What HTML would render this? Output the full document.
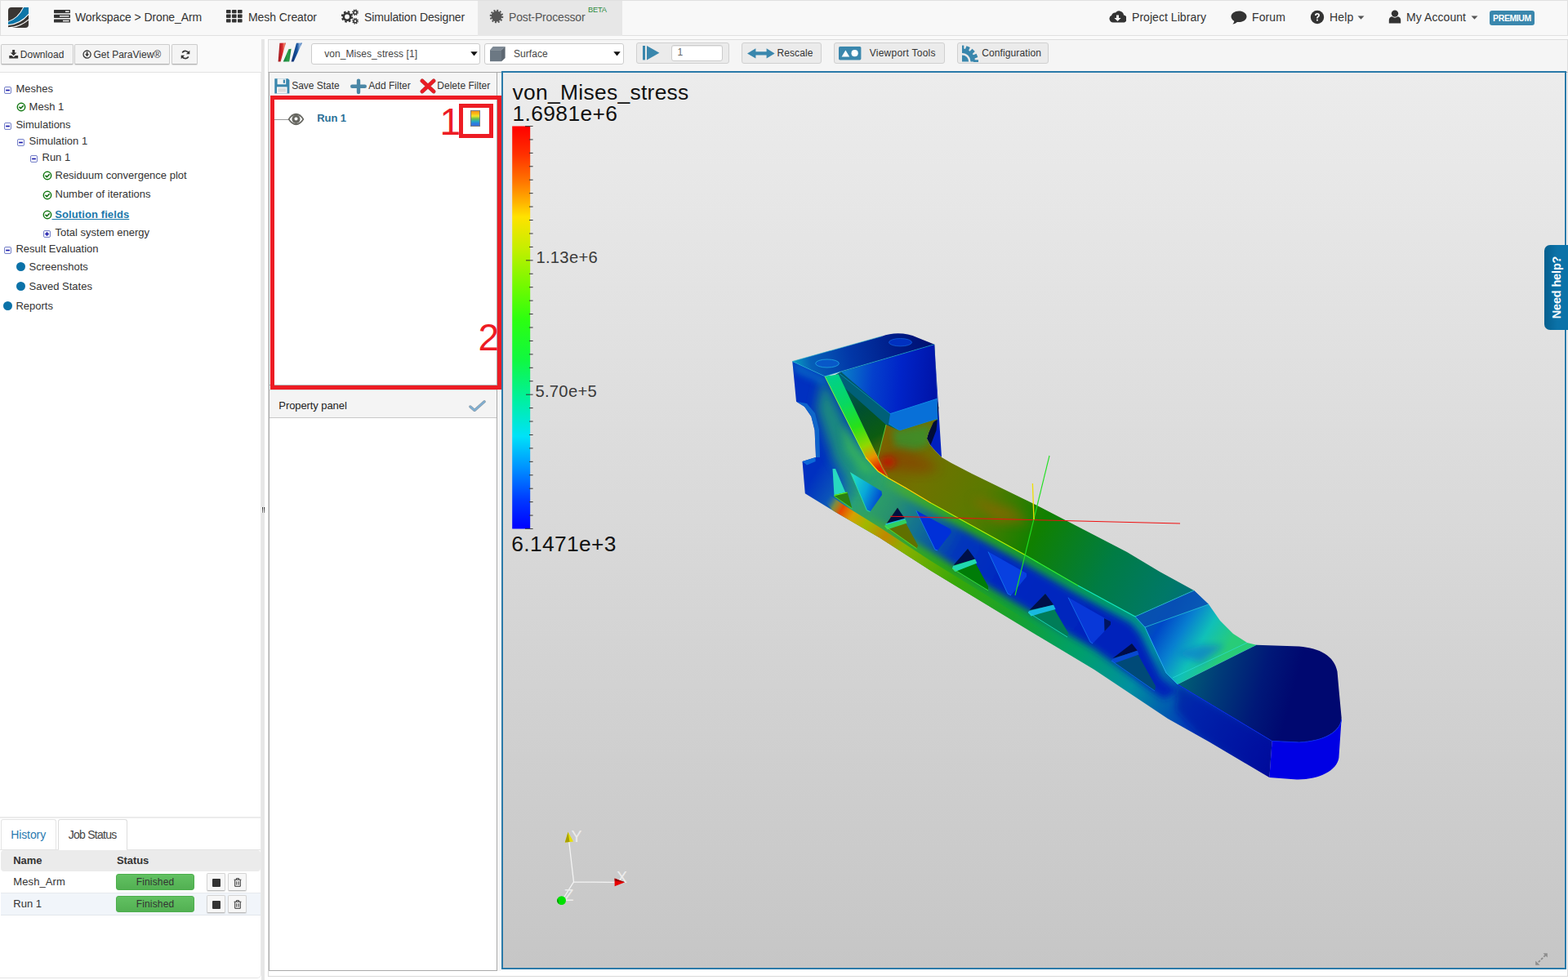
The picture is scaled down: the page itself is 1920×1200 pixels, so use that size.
<!DOCTYPE html>
<html><head><meta charset="utf-8"><title>Post-Processor</title>
<style>
*{box-sizing:border-box;margin:0;padding:0}
html,body{width:1920px;height:1200px;overflow:hidden;background:#fff;font-family:"Liberation Sans",sans-serif;color:#333}
.abs{position:absolute}
#nav{position:absolute;left:0;top:0;width:1920px;height:44px;background:#f8f8f8;border:1px solid #e0e0e0;}
#nav .it{position:absolute;top:0;height:42px;line-height:41px;font-size:14px;color:#333;white-space:nowrap}
#nav svg{position:absolute}
#lefttb{position:absolute;left:0;top:44px;width:320px;height:45px;background:#fafafa;border-bottom:1px solid #e3e3e3}
.btn{position:absolute;height:25px;border:1px solid #ccc;border-bottom-color:#b3b3b3;border-radius:2px;background:#f4f4f4;font-size:12px;line-height:23px;color:#333;white-space:nowrap;box-shadow:0 1px 1px rgba(0,0,0,.12)}
#tree{position:absolute;left:0;top:89px;width:320px;font-size:13px;color:#333}
#tree div{position:absolute;white-space:nowrap;height:16px;line-height:16px}
#splitter{position:absolute;left:320px;top:48px;width:4px;height:1152px;background:#e6e6e6}
#maintb{position:absolute;left:328px;top:48px;width:1592px;height:41px;background:#f5f5f5;border:1px solid #ddd;border-bottom:1px solid #a9a9a9}
.sel{position:absolute;top:53px;height:26px;background:#fff;border:1px solid #ccc;border-radius:3px;font-size:12px;line-height:24.8px;color:#444}
.tbtn{position:absolute;top:52px;height:26px;border:1px solid #d0d0d0;border-radius:3px;background:#ebebeb;font-size:12px;line-height:24px;color:#333;white-space:nowrap}
#fpanel{position:absolute;left:329px;top:88px;width:280px;height:1101px;border:1px solid #a9a9a9;background:#fff}
#ftb{position:absolute;left:0;top:0;width:278px;height:29px;background:#f5f5f5;font-size:12px;color:#333}
#view{position:absolute;left:614px;top:87px;width:1304px;height:1100px;border:2px solid #2a7aa9;background:linear-gradient(#ececec,#c6c6c6);overflow:hidden}
#job{position:absolute;left:0;top:1000px;width:320px;height:200px}
.fin{position:absolute;left:142px;width:96px;height:20px;border-radius:3px;background:linear-gradient(#62c162,#52b052);border:1px solid #4cae4c;color:#333;font-size:12px;line-height:18px;text-align:center;letter-spacing:0.15px}
.sb{position:absolute;width:23px;height:22px;border:1px solid #d4d4d4;border-bottom-color:#bbb;border-radius:2px;background:#f7f7f7;box-shadow:0 1px 1px rgba(0,0,0,.1)}
.sb i{position:absolute;left:6px;top:5.5px;width:10px;height:10px;background:#333;border-radius:1px}
</style></head><body>
<div id="nav">
<svg style="left:9px;top:8px" width="25" height="25" viewBox="0 0 25 25"><defs><clipPath id="lg"><path d="M0 4 Q0 0 4 0 L25 0 L25 21 Q25 25 21 25 L0 25 Z"/></clipPath></defs><g clip-path="url(#lg)"><rect width="25" height="25" fill="#3a3633"/><path d="M-1 17.2 Q12 13.5 18.6 -1 L26 -1 L26 8 Q15 21.5 -1 22.2 Z" fill="#fff"/><path d="M-1 18 Q13 14.5 19.6 -1 L26 -1 L26 6.6 Q15 20 -1 21.2 Z" fill="#0d76a8"/><path d="M-1 24.4 Q14 24 26 13.6 L26 14.8 Q14 25.4 -1 25.4 Z" fill="#fff"/></g></svg>
<svg style="left:65px;top:11px" width="20" height="16" viewBox="0 0 20 16"><g fill="#333"><rect x="0" y="0" width="20" height="4.2" rx=".6"/><rect x="0" y="5.7" width="20" height="4.2" rx=".6"/><rect x="0" y="11.4" width="20" height="4.2" rx=".6"/></g><g fill="#f4f4f4"><rect x="14" y="1.4" width="4.6" height="1.5"/><rect x="7" y="7.1" width="11.6" height="1.5"/><rect x="11" y="12.8" width="7.6" height="1.5"/></g></svg>
<span class="it" id="n1" style="letter-spacing:-0.11px;left:91px">Workspace &gt; Drone_Arm</span>
<svg style="left:276px;top:11px" width="20" height="16" viewBox="0 0 20 16"><g fill="#333"><rect x="0" y="0" width="5.6" height="4.3" rx=".7"/><rect x="7" y="0" width="5.6" height="4.3" rx=".7"/><rect x="14" y="0" width="5.6" height="4.3" rx=".7"/><rect x="0" y="5.6" width="5.6" height="4.3" rx=".7"/><rect x="7" y="5.6" width="5.6" height="4.3" rx=".7"/><rect x="14" y="5.6" width="5.6" height="4.3" rx=".7"/><rect x="0" y="11.2" width="5.6" height="4.3" rx=".7"/><rect x="7" y="11.2" width="5.6" height="4.3" rx=".7"/><rect x="14" y="11.2" width="5.6" height="4.3" rx=".7"/></g></svg>
<span class="it" id="n2" style="letter-spacing:-0.07px;left:303px">Mesh Creator</span>
<svg style="left:417px;top:10px" width="22" height="19" viewBox="0 0 22 19"><g fill="none" stroke="#333"><circle cx="7" cy="9.5" r="4.2" stroke-width="2.6"/><circle cx="7" cy="9.5" r="6.2" stroke-width="2" stroke-dasharray="2.6 2.27"/><circle cx="17" cy="4.2" r="2" stroke-width="1.5"/><circle cx="17" cy="4.2" r="3.2" stroke-width="1.4" stroke-dasharray="1.4 1.11"/><circle cx="17" cy="14.8" r="2" stroke-width="1.5"/><circle cx="17" cy="14.8" r="3.2" stroke-width="1.4" stroke-dasharray="1.4 1.11"/></g></svg>
<span class="it" id="n3" style="letter-spacing:-0.12px;left:445px">Simulation Designer</span>
<div style="position:absolute;left:584px;top:0;width:177px;height:43px;background:#e7e7e7"></div>
<svg style="left:598px;top:10px" width="18" height="18" viewBox="0 0 18 18"><circle cx="9" cy="9" r="6.4" fill="#555"/><circle cx="9" cy="9" r="7.2" fill="none" stroke="#555" stroke-width="2.2" stroke-dasharray="2 1.77"/></svg>
<span class="it" id="n4" style="letter-spacing:-0.16px;left:622px;color:#555">Post-Processor</span>
<span id="beta" style="position:absolute;left:719px;top:6px;font-size:9.3px;line-height:11px;color:#2e8b3e;letter-spacing:-0.2px">BETA</span>
<svg style="left:1357px;top:11px" width="21" height="16" viewBox="0 0 21 16"><path d="M5 15.5 A4.6 4.6 0 0 1 3.2 6.7 A4 4 0 0 1 8 3.6 A5.6 5.6 0 0 1 18 6.4 A4.5 4.5 0 0 1 16.6 15.5 Z" fill="#333"/><path d="M9 6.5 h3 v3.4 h2.6 L10.5 14 L6.4 9.9 H9 Z" fill="#f8f8f8"/></svg>
<span class="it" id="n5" style="letter-spacing:0.05px;left:1385px">Project Library</span>
<svg style="left:1506px;top:12px" width="20" height="17" viewBox="0 0 20 17"><path d="M10 0.5 C15.2 0.5 19.5 3.5 19.5 7.3 C19.5 11.1 15.2 14.1 10 14.1 C9.2 14.1 8.5 14 7.8 13.9 C6.4 15.4 4.4 16.2 2.4 16.4 C3.6 15.4 4.2 14.1 4.2 12.8 C1.9 11.5 0.5 9.5 0.5 7.3 C0.5 3.5 4.8 0.5 10 0.5 Z" fill="#333"/></svg>
<span class="it" id="n6" style="letter-spacing:0.10px;left:1532px">Forum</span>
<svg style="left:1603px;top:11px" width="18" height="18" viewBox="0 0 18 18"><circle cx="9" cy="9" r="8.2" fill="#333"/><path d="M6 6.9 Q6 4 9 4 Q12 4 12 6.7 Q12 8.4 10.3 9.2 Q9.9 9.5 9.9 10.6 H8 Q7.9 8.9 9 8.2 Q10 7.6 10 6.8 Q10 5.8 9 5.8 Q7.9 5.8 7.9 6.9 Z M8 11.7 h1.9 v1.9 h-1.9 Z" fill="#f8f8f8"/></svg>
<span class="it" id="n7" style="letter-spacing:0.17px;left:1627px">Help</span>
<svg style="left:1661px;top:18px" width="9" height="5" viewBox="0 0 9 5"><path d="M0.5 0.5 H8.5 L4.5 4.7 Z" fill="#555"/></svg>
<svg style="left:1699px;top:11px" width="16" height="17" viewBox="0 0 16 17"><circle cx="8" cy="4.6" r="4.2" fill="#333"/><path d="M0.8 16.5 V12.5 Q0.8 9 4.5 8.3 Q8 11 11.5 8.3 Q15.2 9 15.2 12.5 V16.5 Z" fill="#333"/></svg>
<span class="it" id="n8" style="letter-spacing:0.07px;left:1721px">My Account</span>
<svg style="left:1800px;top:18px" width="9" height="5" viewBox="0 0 9 5"><path d="M0.5 0.5 H8.5 L4.5 4.7 Z" fill="#555"/></svg>
<span id="prem" style="position:absolute;left:1823px;top:12px;width:55px;height:18px;border-radius:3px;background:#3a87ad;color:#fff;font-weight:bold;font-size:10.5px;line-height:19px;text-align:center;letter-spacing:-0.4px">PREMIUM</span>
</div>
<div class="abs" style="left:0;top:44px;width:1920px;height:4px;background:#fafafa"></div>
<div id="lefttb">
<div class="btn" style="left:1px;top:10px;width:89px"><svg style="position:absolute;left:9px;top:6px" width="11.6" height="10.6" viewBox="0 0 13 11" preserveAspectRatio="none"><path d="M4.6 0 h3.4 v3.6 h2.6 L6.3 7.6 L2 3.6 h2.6 Z" fill="#333"/><path d="M0.3 7.3 h3.4 l2.6 2 l2.6 -2 h3.6 v3.5 h-12.2 Z" fill="#333"/></svg><span id="b1" style="position:absolute;left:22.8px;top:1.2px;letter-spacing:0.02px">Download</span></div>
<div class="btn" style="left:91px;top:10px;width:117px"><svg style="position:absolute;left:9px;top:6.4px" width="11.2" height="11.2" viewBox="0 0 12 12"><circle cx="6" cy="6" r="4.9" fill="none" stroke="#333" stroke-width="1.4"/><path d="M5 2.8 h2 v2.9 h1.7 L6 8.9 L3.3 5.7 H5 Z" fill="#333"/></svg><span id="b2" style="position:absolute;left:22.5px;top:1.2px;letter-spacing:0px">Get ParaView®</span></div>
<div class="btn" style="left:210px;top:10px;width:32px"><svg style="position:absolute;left:9.5px;top:6px" width="12" height="12" viewBox="0 0 12 12"><path d="M10.2 4.6 A4.5 4.5 0 0 0 2.2 3.4" fill="none" stroke="#333" stroke-width="1.7"/><path d="M1.8 7.4 A4.5 4.5 0 0 0 9.8 8.6" fill="none" stroke="#333" stroke-width="1.7"/><path d="M11.3 0.8 V5.2 H6.9 Z" fill="#333"/><path d="M0.7 11.2 V6.8 H5.1 Z" fill="#333"/></svg></div>
</div>
<div id="tree">
<svg style="position:absolute;left:5px;top:17px" width="9.4" height="9.4" viewBox="0 0 10 10"><rect x="0.5" y="0.5" width="8.6" height="8.6" rx="1.6" fill="#f4f4fb" stroke="#6b78c4" stroke-width="1"/><rect x="2.3" y="4" width="5" height="1.6" fill="#1111a8"/></svg>
<div id="t0" style="left:19.4px;top:12.05px;">Meshes</div>
<svg style="position:absolute;left:19.5px;top:35.7px" width="12" height="12" viewBox="0 0 12 12"><circle cx="6" cy="6" r="4.7" fill="#fff" stroke="#147a14" stroke-width="1.5"/><path d="M3.5 5.9 L5.4 7.7 L8.7 4.2" fill="none" stroke="#0f6a0f" stroke-width="1.6"/></svg>
<div id="t1" style="left:35.6px;top:34.05px;">Mesh 1</div>
<svg style="position:absolute;left:5px;top:61px" width="9.4" height="9.4" viewBox="0 0 10 10"><rect x="0.5" y="0.5" width="8.6" height="8.6" rx="1.6" fill="#f4f4fb" stroke="#6b78c4" stroke-width="1"/><rect x="2.3" y="4" width="5" height="1.6" fill="#1111a8"/></svg>
<div id="t2" style="left:19.4px;top:55.90px;">Simulations</div>
<svg style="position:absolute;left:21px;top:81px" width="9.4" height="9.4" viewBox="0 0 10 10"><rect x="0.5" y="0.5" width="8.6" height="8.6" rx="1.6" fill="#f4f4fb" stroke="#6b78c4" stroke-width="1"/><rect x="2.3" y="4" width="5" height="1.6" fill="#1111a8"/></svg>
<div id="t3" style="left:35.6px;top:75.90px;">Simulation 1</div>
<svg style="position:absolute;left:37px;top:101px" width="9.4" height="9.4" viewBox="0 0 10 10"><rect x="0.5" y="0.5" width="8.6" height="8.6" rx="1.6" fill="#f4f4fb" stroke="#6b78c4" stroke-width="1"/><rect x="2.3" y="4" width="5" height="1.6" fill="#1111a8"/></svg>
<div id="t4" style="left:51.5px;top:96.30px;">Run 1</div>
<svg style="position:absolute;left:51.5px;top:120.2px" width="12" height="12" viewBox="0 0 12 12"><circle cx="6" cy="6" r="4.7" fill="#fff" stroke="#147a14" stroke-width="1.5"/><path d="M3.5 5.9 L5.4 7.7 L8.7 4.2" fill="none" stroke="#0f6a0f" stroke-width="1.6"/></svg>
<div id="t5" style="left:67.5px;top:118.05px;">Residuum convergence plot</div>
<svg style="position:absolute;left:51.5px;top:143.7px" width="12" height="12" viewBox="0 0 12 12"><circle cx="6" cy="6" r="4.7" fill="#fff" stroke="#147a14" stroke-width="1.5"/><path d="M3.5 5.9 L5.4 7.7 L8.7 4.2" fill="none" stroke="#0f6a0f" stroke-width="1.6"/></svg>
<div id="t6" style="left:67.5px;top:141.30px;">Number of iterations</div>
<svg style="position:absolute;left:51.5px;top:168.2px" width="12" height="12" viewBox="0 0 12 12"><circle cx="6" cy="6" r="4.7" fill="#fff" stroke="#147a14" stroke-width="1.5"/><path d="M3.5 5.9 L5.4 7.7 L8.7 4.2" fill="none" stroke="#0f6a0f" stroke-width="1.6"/></svg>
<div id="t7" style="letter-spacing:0.1px;left:63.5px;top:165.80px;font-weight:bold;color:#1a78ab;text-decoration:underline;white-space:pre"> Solution fields</div>
<svg style="position:absolute;left:53px;top:193px" width="9.4" height="9.4" viewBox="0 0 10 10"><rect x="0.5" y="0.5" width="8.6" height="8.6" rx="1.6" fill="#f4f4fb" stroke="#6b78c4" stroke-width="1"/><rect x="2.3" y="4" width="5" height="1.6" fill="#1111a8"/><rect x="4" y="2.3" width="1.6" height="5" fill="#1111a8"/></svg>
<div id="t8" style="left:67.5px;top:188.05px;">Total system energy</div>
<svg style="position:absolute;left:5px;top:213px" width="9.4" height="9.4" viewBox="0 0 10 10"><rect x="0.5" y="0.5" width="8.6" height="8.6" rx="1.6" fill="#f4f4fb" stroke="#6b78c4" stroke-width="1"/><rect x="2.3" y="4" width="5" height="1.6" fill="#1111a8"/></svg>
<div id="t9" style="left:19.4px;top:208.05px;">Result Evaluation</div>
<div style="position:absolute;left:20.0px;top:232.0px;width:11.4px;height:11.4px;border-radius:50%;background:#0b72a8"></div>
<div id="t10" style="left:35.6px;top:229.90px;">Screenshots</div>
<div style="position:absolute;left:20.0px;top:256.0px;width:11.4px;height:11.4px;border-radius:50%;background:#0b72a8"></div>
<div id="t11" style="left:35.6px;top:254.05px;">Saved States</div>
<div style="position:absolute;left:4.0px;top:280.0px;width:11.4px;height:11.4px;border-radius:50%;background:#0b72a8"></div>
<div id="t12" style="left:19.4px;top:278.05px;">Reports</div>
</div>
<div id="job">
<div style="position:absolute;left:0;top:0;width:320px;height:2px;background:#ececec"></div>
<div style="position:absolute;left:1px;top:3px;width:68px;height:37px;border:1px solid #e4e4e4;border-bottom:none;border-radius:3px 3px 0 0"></div>
<div style="position:absolute;left:71px;top:3px;width:85px;height:38px;border:1px solid #ddd;border-bottom:none;border-radius:3px 3px 0 0;background:#fff"></div>
<div style="position:absolute;left:0;top:39.5px;width:320px;height:1.5px;background:#e4e4e4"></div>
<div style="position:absolute;left:72px;top:39px;width:83px;height:3px;background:#fff"></div>
<span id="j1" style="position:absolute;left:13.2px;top:14.2px;font-size:14px;line-height:16px;color:#2a7ab0;letter-spacing:-0.1px">History</span>
<span id="j2" style="position:absolute;left:83.8px;top:14.2px;font-size:14px;line-height:16px;color:#444;letter-spacing:-0.75px">Job Status</span>
<div style="position:absolute;left:1px;top:40.5px;width:318px;height:26px;background:#ebebeb;border-radius:4px"></div>
<span id="j3" style="position:absolute;left:16.3px;top:45.8px;font-size:13px;line-height:15px;font-weight:bold;color:#333;letter-spacing:-0.1px">Name</span>
<span id="j4" style="position:absolute;left:143px;top:45.8px;font-size:13px;line-height:15px;font-weight:bold;color:#333;letter-spacing:-0.1px">Status</span>
<div style="position:absolute;left:1px;top:92.5px;width:318px;height:28px;background:#f1f5fa;border-top:1px solid #e6e9ee;border-bottom:1px solid #e2e6ec"></div>
<span id="j5" style="position:absolute;left:16.3px;top:72px;font-size:13px;line-height:15px;color:#333;letter-spacing:0.1px">Mesh_Arm</span>
<span id="j6" style="position:absolute;left:16.3px;top:99.2px;font-size:13px;line-height:15px;color:#333">Run 1</span>
<div class="fin" style="top:70px"><span id="j7">Finished</span></div>
<div class="fin" style="top:97px">Finished</div>
<div class="sb" style="left:253px;top:69px"><i></i></div>
<div class="sb" style="left:279px;top:69px"><svg width="10" height="11" viewBox="0 0 10 11" style="position:absolute;left:5.5px;top:5px"><path d="M0.6 2.2 H9.4 M3.4 2 V0.7 H6.6 V2 M1.7 2.6 V10.3 H8.3 V2.6 M3.8 4.2 V8.6 M6.2 4.2 V8.6" fill="none" stroke="#333" stroke-width="1"/></svg></div>
<div class="sb" style="left:253px;top:96px"><i></i></div>
<div class="sb" style="left:279px;top:96px"><svg width="10" height="11" viewBox="0 0 10 11" style="position:absolute;left:5.5px;top:5px"><path d="M0.6 2.2 H9.4 M3.4 2 V0.7 H6.6 V2 M1.7 2.6 V10.3 H8.3 V2.6 M3.8 4.2 V8.6 M6.2 4.2 V8.6" fill="none" stroke="#333" stroke-width="1"/></svg></div>
</div>
<div class="abs" style="left:0;top:89px;width:320px;height:1109px;border-right:1px solid #e9e9e9;border-bottom:1px solid #e4e4e4;border-radius:0 0 5px 0"></div>
<div id="splitter"><div style="position:absolute;left:0;top:573px;width:4px;height:7px;background:#fff"></div><div style="position:absolute;left:1px;top:573px;width:1px;height:7px;background:linear-gradient(#222,#888)"></div><div style="position:absolute;left:3px;top:573px;width:1px;height:7px;background:linear-gradient(#222,#888)"></div></div>
<div class="abs" style="left:328px;top:48px;width:1592px;height:1148px;border:1px solid #d9d9d9;border-top:none"></div>
<div id="maintb"></div>
<svg class="abs" style="left:339px;top:51px" width="32" height="26" viewBox="0 0 32 26"><defs><linearGradient id="pvr" x1="0" x2="1"><stop offset="0" stop-color="#9d1c20"/><stop offset=".55" stop-color="#d9262c"/><stop offset=".8" stop-color="#f08a70"/><stop offset="1" stop-color="#c9302c"/></linearGradient><linearGradient id="pvg" x1="0" x2="1"><stop offset="0" stop-color="#0f7a38"/><stop offset=".6" stop-color="#2ea04a"/><stop offset="1" stop-color="#14803a"/></linearGradient><linearGradient id="pvb" x1="0" x2="1"><stop offset="0" stop-color="#0b2c6e"/><stop offset=".55" stop-color="#1756a0"/><stop offset=".8" stop-color="#8fb2dc"/><stop offset="1" stop-color="#1c5aa6"/></linearGradient></defs><path d="M3.4 1.8 L11 1.6 L4.6 24.6 L1.6 24.6 Z" fill="url(#pvr)"/><path d="M14.4 9.2 L17.6 8.8 L15.2 24.6 L7.8 24.6 Z" fill="url(#pvg)"/><path d="M24 1.8 L31 1.4 L20.6 24.6 L17.6 24.6 Z" fill="url(#pvb)"/></svg>
<div class="sel" style="left:381px;width:207px"><span id="s1" style="position:absolute;left:15.2px;letter-spacing:0.06px">von_Mises_stress [1]</span><svg style="position:absolute;right:2px;top:9px" width="9" height="6" viewBox="0 0 9 6"><path d="M0.3 0.3 H8.7 L4.5 5.6 Z" fill="#111"/></svg></div>
<div class="sel" style="left:593px;width:171px"><svg style="position:absolute;left:5px;top:2px" width="21" height="20" viewBox="0 0 21 20"><path d="M1 5.2 L15 5.2 L15 19.2 L1 19.2 Z" fill="#6c7883"/><path d="M1 5.2 L4.6 1 L19.6 1 L15 5.2 Z" fill="#7f8a95"/><path d="M15 5.2 L19.6 1 L19.6 15 L15 19.2 Z" fill="#5d6872"/></svg><span id="s2" style="position:absolute;left:35px;letter-spacing:0.05px">Surface</span><svg style="position:absolute;right:3px;top:9px" width="9" height="6" viewBox="0 0 9 6"><path d="M0.3 0.3 H8.7 L4.5 5.6 Z" fill="#111"/></svg></div>
<div class="tbtn" style="left:779px;width:114px"><svg style="position:absolute;left:7px;top:3px" width="22" height="18" viewBox="0 0 22 18"><rect x="0" y="0" width="3" height="17.4" fill="#3a87ad"/><path d="M5 0 L20.4 8.7 L5 17.4 Z" fill="#3a87ad"/></svg><div style="position:absolute;left:41.5px;top:2px;width:63px;height:20.4px;background:#fff;border:1px solid #ccc;border-radius:3px;box-shadow:inset 0 1px 1px rgba(0,0,0,.1);font-size:12px;line-height:17px;color:#666;padding-left:7px">1</div></div>
<div class="tbtn" style="left:908px;width:98px"><svg style="position:absolute;left:5.5px;top:6px" width="34" height="13" viewBox="0 0 34 13"><path d="M0 6.4 L10.4 0.3 L10.4 4.3 L23.6 4.3 L23.6 0.3 L33.6 6.4 L23.6 12.5 L23.6 8.5 L10.4 8.5 L10.4 12.5 Z" fill="#3a87ad"/></svg><span id="m1" style="position:absolute;left:42.5px;letter-spacing:0.08px">Rescale</span></div>
<div class="tbtn" style="left:1021px;width:136px"><svg style="position:absolute;left:5px;top:4px" width="28" height="17" viewBox="0 0 28 17"><rect x="0" y="0" width="27.4" height="16.4" rx="1.6" fill="#3a87ad"/><path d="M3.6 12.4 L8.4 4.4 L13.2 12.4 Z" fill="#fff"/><circle cx="19.6" cy="8.2" r="4.1" fill="#fff"/></svg><span id="m2" style="position:absolute;left:42.7px;letter-spacing:0.25px">Viewport Tools</span></div>
<div class="tbtn" style="left:1172px;width:112px"><svg style="position:absolute;left:5px;top:1.5px" width="21" height="21" viewBox="0 0 21 21"><g fill="#3a87ad"><path d="M0 12.4 A8.2 8.2 0 0 1 8.2 20.6 L0 20.6 Z"/><path d="M0 4.6 A16 16 0 0 1 16 20.6 L10.6 20.6 A10.6 10.6 0 0 0 0 10 Z"/><rect x="-2.3" y="-20" width="4.6" height="6" transform="translate(0 20.6) rotate(0)"/><rect x="-2.3" y="-20" width="4.6" height="6" transform="translate(0 20.6) rotate(22.5)"/><rect x="-2.3" y="-20" width="4.6" height="6" transform="translate(0 20.6) rotate(45)"/><rect x="-2.3" y="-20" width="4.6" height="6" transform="translate(0 20.6) rotate(67.5)"/><rect x="-2.3" y="-20" width="4.6" height="6" transform="translate(0 20.6) rotate(90)"/></g></svg><span id="m3" style="position:absolute;left:29.3px;letter-spacing:0.1px">Configuration</span></div>
<div id="fpanel"><div id="ftb">
<svg style="position:absolute;left:6px;top:7px" width="19" height="19" viewBox="0 0 19 19"><path d="M0.3 0.3 H16.6 L18.4 2 V18.4 H0.3 Z" fill="#3a87ad"/><rect x="3.6" y="0.3" width="10.6" height="7" fill="#f5f5f5"/><rect x="10.8" y="1.6" width="2.2" height="4.2" fill="#3a87ad"/><rect x="3" y="10.4" width="12.6" height="8" fill="#f5f5f5"/><rect x="4.6" y="12.2" width="9.4" height="4.4" fill="#dcdcdc"/></svg>
<span id="f1" style="position:absolute;left:27.2px;top:8.6px;line-height:14px;letter-spacing:-0.03px">Save State</span>
<svg style="position:absolute;left:99px;top:7px" width="20" height="20" viewBox="0 0 20 20"><path d="M10 2.6 V17 M2.2 9.8 H17.8" stroke="#4b87a6" stroke-width="4.4" stroke-linecap="round" fill="none"/></svg>
<span id="f2" style="position:absolute;left:121.3px;top:8.6px;line-height:14px">Add Filter</span>
<svg style="position:absolute;left:184px;top:7px" width="20" height="19" viewBox="0 0 20 19"><path d="M3 3 L17 16 M17 3 L3 16" stroke="#b8484c" stroke-width="5" stroke-linecap="round" fill="none"/><path d="M3 3 L17 16 M17 3 L3 16" stroke="#ea1c24" stroke-width="4" stroke-linecap="round" fill="none"/></svg>
<span id="f3" style="position:absolute;left:205.3px;top:8.6px;line-height:14px;letter-spacing:0.02px">Delete Filter</span>
</div>
<div style="position:absolute;left:0;top:29px;width:278px;height:354px;border-bottom:1px solid #b5b5b5"></div>
<div style="position:absolute;left:6px;top:57px;width:20px;height:1px;background:#999"></div>
<svg style="position:absolute;left:22px;top:48.6px" width="21" height="16" viewBox="0 0 21 16"><path d="M0.6 8 Q5 0.8 10.5 0.8 Q16 0.8 20.4 8 Q16 15.2 10.5 15.2 Q5 15.2 0.6 8 Z" fill="#666660"/><path d="M2.6 8 Q6 3 10.5 3 Q15 3 18.4 8 Q15 13 10.5 13 Q6 13 2.6 8 Z" fill="#fff"/><circle cx="10.5" cy="7.8" r="5.1" fill="#666660"/><circle cx="10.5" cy="7.6" r="2" fill="#fff"/></svg>
<span id="f4" style="position:absolute;left:58.3px;top:48.3px;font-size:13px;line-height:15px;font-weight:bold;color:#2a6f96;letter-spacing:-0.1px">Run 1</span>
<div style="position:absolute;left:246px;top:46px;width:12px;height:20px;border:1px solid #7a7a80;background:linear-gradient(#f7941d 0%,#fdb913 18%,#f2e52a 34%,#6cc04a 52%,#25a9c0 70%,#2a7de1 84%,#3b6fd6 100%)"></div>
<div style="position:absolute;left:0;top:388px;width:278px;height:35px;background:#f4f4f4;border-top:1px solid #ddd;border-bottom:1px solid #c8c8c8"></div>
<span id="f5" style="position:absolute;left:11.3px;top:400px;font-size:13px;line-height:15px;color:#222;letter-spacing:-0.08px">Property panel</span>
<svg style="position:absolute;left:244px;top:400.6px" width="21.4" height="14.8" viewBox="0 0 23 16"><path d="M2 8.6 L7.6 13.4 L20.6 2" fill="none" stroke="#8a9aa6" stroke-width="3.6" stroke-linecap="round" stroke-linejoin="round"/><path d="M2 8.6 L7.6 13.4 L20.6 2" fill="none" stroke="#7fb0d4" stroke-width="2.2" stroke-linecap="round" stroke-linejoin="round"/></svg>
</div>
<div class="abs" style="left:609px;top:89px;width:5px;height:1100px;background:#f5f5f5"></div>
<div class="abs" style="left:331px;top:117px;width:283px;height:360px;border:5px solid #ed1c24"></div>
<div class="abs" style="left:562px;top:127px;width:42px;height:42px;border:5px solid #ed1c24"></div>
<span id="r1" class="abs" style="left:538.6px;top:122.8px;font-size:46px;line-height:52px;color:#ed1c24;">1</span>
<span id="r2" class="abs" style="left:585.5px;top:387px;font-size:46px;line-height:52px;color:#ed1c24;">2</span>
<div id="view"><svg id="scene" style="position:absolute;left:-616px;top:-89px" width="1920" height="1200" viewBox="0 0 1920 1200" font-family="Liberation Sans, sans-serif">
<defs><linearGradient id="cbar" x1="0" y1="0" x2="0" y2="1"><stop offset="0" stop-color="#ff0000"/><stop offset=".07" stop-color="#ff3000"/><stop offset=".14" stop-color="#ff7800"/><stop offset=".19" stop-color="#ffb400"/><stop offset=".225" stop-color="#ffe200"/><stop offset=".3" stop-color="#c8ee00"/><stop offset=".4" stop-color="#70fa00"/><stop offset=".48" stop-color="#2cff10"/><stop offset=".58" stop-color="#10f840"/><stop offset=".68" stop-color="#00f0a0"/><stop offset=".77" stop-color="#00e2f8"/><stop offset=".85" stop-color="#0090ff"/><stop offset=".93" stop-color="#0038ff"/><stop offset="1" stop-color="#0000ff"/></linearGradient></defs>
<!--MS--><defs>
<filter id="b2" x="-20%" y="-20%" width="140%" height="140%"><feGaussianBlur stdDeviation="2"/></filter>
<filter id="b4" x="-30%" y="-30%" width="160%" height="160%"><feGaussianBlur stdDeviation="4"/></filter>
<filter id="b7" x="-40%" y="-40%" width="180%" height="180%"><feGaussianBlur stdDeviation="7"/></filter>
<linearGradient id="gTop" gradientUnits="userSpaceOnUse" x1="1075" y1="570" x2="1462" y2="775"><stop offset="0" stop-color="#7a6400"/><stop offset=".12" stop-color="#707200"/><stop offset=".3" stop-color="#5a7a00"/><stop offset=".48" stop-color="#108000"/><stop offset=".7" stop-color="#007c44"/><stop offset=".88" stop-color="#007868"/><stop offset="1" stop-color="#006c84"/></linearGradient>
<linearGradient id="gSide" gradientUnits="userSpaceOnUse" x1="985" y1="600" x2="1555" y2="945"><stop offset="0" stop-color="#0030c0"/><stop offset=".05" stop-color="#0c58b8"/><stop offset=".09" stop-color="#28a078"/><stop offset=".16" stop-color="#40a838"/><stop offset=".3" stop-color="#28a418"/><stop offset=".45" stop-color="#10a038"/><stop offset=".58" stop-color="#00a068"/><stop offset=".7" stop-color="#0090a0"/><stop offset=".82" stop-color="#0040b8"/><stop offset="1" stop-color="#000898"/></linearGradient>
<linearGradient id="gBot" gradientUnits="userSpaceOnUse" x1="1010" y1="615" x2="1300" y2="790"><stop offset="0" stop-color="#2080a0" stop-opacity="0"/><stop offset=".035" stop-color="#c0a000" stop-opacity=".6"/><stop offset=".065" stop-color="#e84800"/><stop offset=".11" stop-color="#d8a000"/><stop offset=".17" stop-color="#a0b800"/><stop offset=".25" stop-color="#c08800"/><stop offset=".33" stop-color="#88b000"/><stop offset=".55" stop-color="#38a808"/><stop offset="1" stop-color="#10a038" stop-opacity="0"/></linearGradient>
<linearGradient id="gTruss" gradientUnits="userSpaceOnUse" x1="1040" y1="600" x2="1450" y2="830"><stop offset="0.04" stop-color="#1080c0" stop-opacity="0"/><stop offset=".16" stop-color="#0a60c8" stop-opacity=".55"/><stop offset=".32" stop-color="#0030c4" stop-opacity=".95"/><stop offset=".45" stop-color="#0028c0"/><stop offset="1" stop-color="#0020b8"/></linearGradient>
<linearGradient id="gBlock" gradientUnits="userSpaceOnUse" x1="970" y1="500" x2="1060" y2="520"><stop offset="0" stop-color="#0038c8"/><stop offset=".3" stop-color="#0848c0"/><stop offset=".62" stop-color="#0e68b4"/><stop offset=".86" stop-color="#20a070"/><stop offset="1" stop-color="#30b050"/></linearGradient>
<linearGradient id="gRib" gradientUnits="userSpaceOnUse" x1="1018" y1="460" x2="1072" y2="575"><stop offset="0" stop-color="#00d08c"/><stop offset=".3" stop-color="#08d860"/><stop offset=".55" stop-color="#28e018"/><stop offset=".75" stop-color="#90d800"/><stop offset=".88" stop-color="#e89000"/><stop offset="1" stop-color="#e02800"/></linearGradient>
<linearGradient id="gTopF" gradientUnits="userSpaceOnUse" x1="972" y1="445" x2="1140" y2="415"><stop offset="0" stop-color="#089cc0"/><stop offset=".12" stop-color="#0660b8"/><stop offset=".4" stop-color="#0238a8"/><stop offset=".75" stop-color="#001c88"/><stop offset="1" stop-color="#001070"/></linearGradient>
<linearGradient id="gBig" gradientUnits="userSpaceOnUse" x1="1035" y1="460" x2="1146" y2="470"><stop offset="0" stop-color="#0878c8"/><stop offset=".3" stop-color="#0440cc"/><stop offset=".6" stop-color="#0024c8"/><stop offset="1" stop-color="#0014a8"/></linearGradient>
<linearGradient id="gDk" gradientUnits="userSpaceOnUse" x1="1030" y1="465" x2="1080" y2="560"><stop offset="0" stop-color="#005860"/><stop offset=".4" stop-color="#005030"/><stop offset=".75" stop-color="#0c5c10"/><stop offset="1" stop-color="#5a6a00"/></linearGradient>
<linearGradient id="gSlope" gradientUnits="userSpaceOnUse" x1="1400" y1="760" x2="1490" y2="815"><stop offset="0" stop-color="#0058a8"/><stop offset=".2" stop-color="#0048c8"/><stop offset=".45" stop-color="#0880d0"/><stop offset=".7" stop-color="#10c0b8"/><stop offset="1" stop-color="#28cc78"/></linearGradient>
<linearGradient id="gPad" gradientUnits="userSpaceOnUse" x1="1450" y1="825" x2="1580" y2="860"><stop offset="0" stop-color="#005c74"/><stop offset=".3" stop-color="#003c78"/><stop offset=".7" stop-color="#001878"/><stop offset="1" stop-color="#000870"/></linearGradient>
<linearGradient id="gH2" gradientUnits="userSpaceOnUse" x1="1042" y1="590" x2="1080" y2="605"><stop offset="0" stop-color="#20d8c8"/><stop offset=".5" stop-color="#08a8d8"/><stop offset="1" stop-color="#0048d0"/></linearGradient>
<clipPath id="cSide"><path d="M970.3 442.5 L975 491.7 L985 498 L993.3 510 L997.5 526.7 L999 560 L982.5 565 L985.8 604.2 L1022.5 626.7 L1076.7 658.3 L1140 699 L1260 772 L1340 820 L1430 880 L1480 908 L1554.4 952 L1557.6 907.4 L1442 838 L1428 824 L1414 794 L1402 768 L1390 755 L1320 717 L1256 680 L1140 616 L1110 598 L1087 585 L1075 577 L1060 560 L1053 546.7 L1010 460.8 Z"/></clipPath>
<clipPath id="cTop"><path d="M1085 520 L1101.7 527.5 L1148 513 L1143 517 L1137 530 L1135 537 L1139 545 L1146 553 L1153 560 L1165 567 L1190 580 L1268 618 L1380 676 L1420 700 L1462 723 L1390 755 L1320 717 L1256 680 L1140 616 L1110 598 L1087 585 L1075 577 L1075 560 Z"/></clipPath>
</defs>
<g id="model">
<!-- block right dark sliver -->
<path d="M1144.2 421.7 L1153 560 L1146 553 L1139 545 L1135 537 L1137 530 L1143 515 L1148 513 L1147.5 488.3 Z" fill="#0020c0"/>
<path d="M1147.5 488.3 L1149.3 499 L1146.5 527 L1139.5 545 L1135 537 L1137 530 L1143 515 L1148 513 Z" fill="#000c38"/>
<!-- side face -->
<g clip-path="url(#cSide)">
<rect x="960" y="430" width="620" height="540" fill="url(#gSide)"/>
<path d="M1008 462 L1052 548 L1076 580 L1070 600 L1044 598 L1020 560 L1000 500 Z" fill="#24a070" opacity=".8" filter="url(#b7)"/>
<path d="M1030 520 L1054 552 L1072 578 L1056 580 L1036 552 Z" fill="#40c050" opacity=".6" filter="url(#b4)"/>
<path d="M968 440 L1010 462 L1012 472 L974 456 Z" fill="#10a0c8" opacity=".45" filter="url(#b4)"/>
<path d="M1040 574 L1084 595 L1137 625 L1253 689 L1317 726 L1385 763 L1396 776 L1422 830 L1442 846 L1425 856 L1340 795 L1238 735 L1148 680 L1066 632 L1030 600 Z" fill="url(#gTruss)" filter="url(#b4)"/>
<path d="M1006 610 L1022.5 628 L1076.7 660 L1140 701 L1260 774 L1300 798 L1300 786 L1260 761 L1140 687 L1076 645 L1034 619 L1016 606 Z" fill="url(#gBot)" filter="url(#b2)"/>

<path d="M1442 838 L1557.6 907.4 L1554.4 952 L1470 902 L1440 870 Z" fill="#0010a0" opacity=".55" filter="url(#b4)"/>
</g>
<path d="M975 491.7 L985 498 L993.3 510 L997.5 526.7 L999 560 L1004 560 L1003 526 L998 506 L988 494 Z" fill="#1478d0" opacity=".7" filter="url(#b2)" clip-path="url(#cSide)"/>
<!-- holes -->
<path d="M1019.5 574 L1023 574 L1043.5 622.8 L1021.5 607.5 Z" fill="#28d8c0"/>
<path d="M1021.8 606 L1037.5 602.5 L1043.5 622.8 L1021.5 608.5 Z" fill="#2c8010"/>
<path d="M1021.6 606.6 L1037.5 603" stroke="#60f020" stroke-width="1.2" fill="none"/>
<path d="M1041.5 578.5 L1079.5 601.5 L1080 606 L1065.5 626.5 L1061.5 625 Z" fill="url(#gH2)"/>
<g id="h3"><path d="M1099 621.7 L1124 668 L1122.5 671.7 L1083.3 644 Z" fill="#607000"/><path d="M1099 621.7 L1108.6 636 L1085 642 Z" fill="#001040"/><path d="M1084.5 642 L1108.4 635.4 L1110.6 640.6 L1086.2 648.6 L1083.3 644 Z" fill="#30d060"/><path d="M1084.5 642 L1108.4 635.4" stroke="#20c0e0" stroke-width="1.4"/></g>
<path d="M1121.7 625 L1164 648 L1165 652 L1148 674 L1145 673 Z" fill="#0030d8"/>
<g id="h5"><path d="M1185 672 L1210 718 L1210 723 L1166 696 Z" fill="#007c08"/><path d="M1185 672 L1194.4 685 L1167.6 692 Z" fill="#001048"/><path d="M1167 693 L1194 684.6 L1196.4 689.6 L1169.6 700 L1166 696 Z" fill="#20d8b0"/></g>
<path d="M1210 675.6 L1257 702 L1257 706 L1238 729 L1234 727 Z" fill="#0840e0"/>
<g id="h7"><path d="M1280 727 L1308 775 L1307 780 L1259 750 Z" fill="#007c58"/><path d="M1280 727 L1290.6 741 L1260.6 747 Z" fill="#001048"/><path d="M1260 748 L1290 740.4 L1292.6 746 L1262.6 754.4 L1259 750 Z" fill="#18b8e0"/></g>
<path d="M1308 731.6 L1360 761 L1360 765 L1338 788 L1335 786 Z" fill="#0838d8"/>
<path d="M1352 757 L1360 761 L1360 765 L1352.5 773 Z" fill="#001460"/>
<g id="h9"><path d="M1386 788 L1415 840 L1414 846 L1361 809 Z" fill="#004a78"/><path d="M1386 788 L1393 797 L1362.6 806 Z" fill="#000c48"/><path d="M1362 807 L1392.6 796.6 L1394.6 801.6 L1365 812 L1361 809 Z" fill="#0848d0"/></g>
<g fill="none" stroke-width="0.9" opacity=".9">
<path d="M1021.5 607.5 L1043.5 622.8" stroke="#50e840"/>
<path d="M1041.5 578.5 L1061.5 625 L1065.5 626.5" stroke="#30e8a0"/>
<path d="M1083.3 644 L1122.5 671.7" stroke="#60f020"/>
<path d="M1121.7 625 L1145 673 L1148 674" stroke="#1880f0"/>
<path d="M1166 696 L1210 723" stroke="#40f040"/>
<path d="M1210 675.6 L1234 727 L1238 729" stroke="#1880f0"/>
<path d="M1259 750 L1307 780" stroke="#20e8c0"/>
<path d="M1308 731.6 L1335 786 L1338 788" stroke="#1878f0"/>
<path d="M1361 809 L1414 846" stroke="#1070f0"/>
</g>
<!-- inner block faces -->
<path d="M1020 460.5 L1030 455 L1144.2 421.7 L1148.5 514 L1101.7 529 L1086 521 L1076 561 Z" fill="#005868"/>
<path d="M1027 459 L1029 470 L1085 520 L1075 560 Z" fill="url(#gDk)"/>
<path d="M1028 457.5 L1090 506.7 L1088 519 L1085 520 L1029 470 Z" fill="#006078"/>
<path d="M1030 455.5 L1144.2 421.7 L1147.5 488.3 L1090 506.7 Z" fill="url(#gBig)"/>
<path d="M1090 506.7 L1147.5 488.3 L1148 513 L1101.7 527.5 L1088 519 Z" fill="#0870d8"/>
<path d="M1090 506.7 L1147.5 488.3" stroke="#1088e8" stroke-width="1" fill="none"/>
<path d="M1028 457.5 L1090 506.7 M1088 519 L1101.7 527.5 L1148 513" stroke="#10a8d8" stroke-width="0.8" fill="none" opacity=".7"/>
<!-- arm top face -->
<g clip-path="url(#cTop)">
<rect x="1060" y="500" width="420" height="270" fill="url(#gTop)"/>
<path d="M1092 526 L1140 520 L1138 545 L1120 552 L1096 548 Z" fill="#20a040" opacity=".6" filter="url(#b4)"/>
<path d="M1082 556 L1100 550 L1124 556 L1140 564 L1150 574 L1130 580 L1100 576 L1084 572 Z" fill="#903000" opacity=".5" filter="url(#b7)"/>
<path d="M1076 562 L1090 558 L1098 566 L1090 574 L1080 572 Z" fill="#c81000" opacity=".8" filter="url(#b4)"/>
<path d="M1190 610 L1240 622 L1262 640 L1220 640 Z" fill="#a06000" opacity=".6" filter="url(#b7)"/>
</g>
<!-- rib strip -->
<path d="M1010 460.8 L1026.7 458.3 L1075 560 L1088 583 L1075 577 L1060 560 L1053 546.7 Z" fill="url(#gRib)"/>
<path d="M1010 460.8 L1053 546.7 L1060 560 L1075 577 L1087 585 L1110 598" stroke="#a0ff20" stroke-width="1" fill="none" opacity=".8"/>
<path d="M1060 560 L1075 577 L1087 585 L1110 598 L1140 616" stroke="#ffd000" stroke-width="1.2" fill="none"/>
<path d="M1140 616 L1256 680" stroke="#b0f000" stroke-width="1.1" fill="none"/>
<path d="M1256 680 L1320 717" stroke="#30f030" stroke-width="1.1" fill="none"/>
<path d="M1320 717 L1390 755" stroke="#10e8c0" stroke-width="1.1" fill="none"/>
<path d="M1085 520 L1075 560 L1080 572 L1087 584" stroke="#60e040" stroke-width="0.8" fill="none"/>
<!-- slope sections -->
<path d="M1390 755 L1462 723 L1480 740 L1494 760 L1510 776 L1527 787 L1538.6 789.8 L1442 838 L1428 824 L1414 794 L1402 768 Z" fill="url(#gSlope)"/>
<path d="M1390 755 L1462 723 L1480 740 L1402 768 Z" fill="#0850b0" opacity=".85"/>
<path d="M1440 800 L1470 790 L1500 790 L1470 812 Z" fill="#0a70d0" opacity=".6" filter="url(#b4)"/>
<path d="M1390 755 L1462 723 M1402 768 L1480 740 M1436 830 L1527 787 M1442 838 L1538.6 789.8" stroke="#30e0e0" stroke-width="0.8" fill="none" opacity=".8"/>
<path d="M1390 755 L1402 768 L1414 794 L1428 824 L1442 838" stroke="#20b0f0" stroke-width="0.9" fill="none"/>
<!-- pad -->
<path d="M1557.6 907.4 L1590.8 909 C1622 907.5 1642 895 1642.7 879.2 L1639.4 928 C1637 944 1614 955 1587.6 954.4 L1554.4 952 Z" fill="#0000e4"/>
<path d="M1442 838 L1538.6 789.8 L1590.8 791.4 C1616 793.5 1634 803 1637.5 822.2 L1639.9 849.2 L1642.7 879.2 C1642 895 1622 907.5 1590.8 909 L1557.6 907.4 Z" fill="url(#gPad)"/>
<path d="M1442 838 L1557.6 907.4 L1590.8 909 C1622 907.5 1641 896 1642.5 881" stroke="#0828f0" stroke-width="1" fill="none"/>
<!-- top face of block -->
<path d="M970.3 442.5 L1080 411.7 C1092 407 1110 406.8 1123 413.3 L1144.2 421.7 L1033 454 L1010 460.8 Z" fill="url(#gTopF)"/>
<ellipse cx="1013" cy="445" rx="14.4" ry="5" fill="#0858c8" stroke="#20a8e0" stroke-width="0.8"/>
<ellipse cx="1102.5" cy="419.2" rx="14" ry="4.7" fill="#0030c0" stroke="#1060d8" stroke-width="0.8"/>
<path d="M970.3 442.5 L1010 460.8 L1033 454 L1144.2 421.7" stroke="#18b8d8" stroke-width="0.8" fill="none" opacity=".75"/>
<path d="M970.3 442.5 L1080 411.7" stroke="#20b0c8" stroke-width="0.8" fill="none" opacity=".7"/>
<!-- foot highlight -->
<path d="M982.5 565 L998.3 560 L998.6 565 L988 569.5 Z" fill="#0c68d8"/>
<!-- axis lines -->
<path d="M1090 632.3 L1445 641" stroke="#f01010" stroke-width="1.1" fill="none"/>
<path d="M1285 558 L1243 729" stroke="#20e020" stroke-width="1.1" fill="none"/>
<path d="M1264.4 592 L1266 636" stroke="#f0e000" stroke-width="1.3" fill="none"/>
</g>
<!--ME-->
<g id="legend">
<text id="vt" x="627.6" y="122" font-size="26.4" fill="#111" letter-spacing="0.3">von_Mises_stress</text>
<text id="vmax" x="627.6" y="148.3" font-size="26.4" fill="#111" letter-spacing="0.35">1.6981e+6</text>
<rect x="627.2" y="154.5" width="22" height="493" fill="url(#cbar)"/>
<path d="M643 154.50 H652.6" stroke="#444" stroke-width="1"/>
<path d="M648 170.93 H652.6" stroke="#333" stroke-width="1"/>
<path d="M648 187.37 H652.6" stroke="#333" stroke-width="1"/>
<path d="M648 203.80 H652.6" stroke="#333" stroke-width="1"/>
<path d="M648 220.23 H652.6" stroke="#333" stroke-width="1"/>
<path d="M648 236.67 H652.6" stroke="#333" stroke-width="1"/>
<path d="M648 253.10 H652.6" stroke="#333" stroke-width="1"/>
<path d="M648 269.53 H652.6" stroke="#333" stroke-width="1"/>
<path d="M648 285.97 H652.6" stroke="#333" stroke-width="1"/>
<path d="M648 302.40 H652.6" stroke="#333" stroke-width="1"/>
<path d="M644 318.83 H652.6" stroke="#333" stroke-width="1"/>
<path d="M648 335.27 H652.6" stroke="#333" stroke-width="1"/>
<path d="M648 351.70 H652.6" stroke="#333" stroke-width="1"/>
<path d="M648 368.13 H652.6" stroke="#333" stroke-width="1"/>
<path d="M648 384.57 H652.6" stroke="#333" stroke-width="1"/>
<path d="M648 401.00 H652.6" stroke="#333" stroke-width="1"/>
<path d="M648 417.43 H652.6" stroke="#333" stroke-width="1"/>
<path d="M648 433.87 H652.6" stroke="#333" stroke-width="1"/>
<path d="M648 450.30 H652.6" stroke="#333" stroke-width="1"/>
<path d="M648 466.73 H652.6" stroke="#333" stroke-width="1"/>
<path d="M644 483.17 H652.6" stroke="#333" stroke-width="1"/>
<path d="M648 499.60 H652.6" stroke="#333" stroke-width="1"/>
<path d="M648 516.03 H652.6" stroke="#333" stroke-width="1"/>
<path d="M648 532.47 H652.6" stroke="#333" stroke-width="1"/>
<path d="M648 548.90 H652.6" stroke="#333" stroke-width="1"/>
<path d="M648 565.33 H652.6" stroke="#333" stroke-width="1"/>
<path d="M648 581.77 H652.6" stroke="#333" stroke-width="1"/>
<path d="M648 598.20 H652.6" stroke="#333" stroke-width="1"/>
<path d="M648 614.63 H652.6" stroke="#333" stroke-width="1"/>
<path d="M648 631.07 H652.6" stroke="#333" stroke-width="1"/>
<path d="M643 647.50 H652.6" stroke="#444" stroke-width="1"/>
<text id="l1" x="656.4" y="322.2" font-size="20.2" fill="#3a3a3a" letter-spacing="0.3">1.13e+6</text>
<text id="l2" x="655.4" y="486.4" font-size="20.2" fill="#3a3a3a" letter-spacing="0.3">5.70e+5</text>
<text id="vmin" x="626.2" y="674.6" font-size="26.4" fill="#111" letter-spacing="0.35">6.1471e+3</text>
</g>
<!--AS--><g id="axes">
<path d="M702.5 1079.8 L696.8 1031 M702.5 1079.8 L752.5 1080.3 M702.5 1079.8 L689.5 1100.5" stroke="#f4f4f4" stroke-width="1.3" fill="none"/>
<text x="699.6" y="1031.2" font-size="19.5" fill="#ececec">Y</text>
<text x="755" y="1081.2" font-size="19.5" fill="#ececec">X</text>
<text x="690.6" y="1103" font-size="19.5" fill="#ececec">Z</text>
<path d="M695.6 1018.8 L702 1030.6 L691.8 1031.4 Z" fill="#e8e000"/><path d="M695.6 1018.8 L697.5 1031 L691.8 1031.4 Z" fill="#a8a000"/>
<path d="M765 1080.3 L752.6 1075.4 L752.6 1085.2 Z" fill="#e80000"/><path d="M765 1080.3 L752.6 1075.4 L752.6 1078.4 Z" fill="#900000"/>
<circle cx="687.6" cy="1102.6" r="5.4" fill="#00e000"/><path d="M683 1100 A5.4 5.4 0 0 0 684.5 1107 Z" fill="#009000"/>
</g>
<!--AE-->
</svg>
<svg style="position:absolute;left:1263px;top:1077px" width="17" height="17" viewBox="0 0 17 17"><g fill="#8c8c8c"><path d="M10.6 1.2 H15.8 V6.4 Z"/><path d="M1.2 10.4 V15.8 H6.6 Z"/></g><path d="M13.4 3.6 L3.6 13.4" stroke="#8c8c8c" stroke-width="1.8" stroke-dasharray="3 1.6" fill="none"/></svg>
</div>
<div class="abs" style="left:1891px;top:300px;width:29px;height:104px;border-radius:7px 0 0 7px;background:linear-gradient(90deg,#055f8e,#0b72a8 55%,#0b72a8)"></div>
<span id="nh" class="abs" style="left:1856px;top:343px;width:100px;height:18px;transform:rotate(-90deg);font-size:14.5px;line-height:18px;font-weight:bold;color:#fff;text-align:center;white-space:nowrap;letter-spacing:-0.15px">Need help?</span>
</body></html>
